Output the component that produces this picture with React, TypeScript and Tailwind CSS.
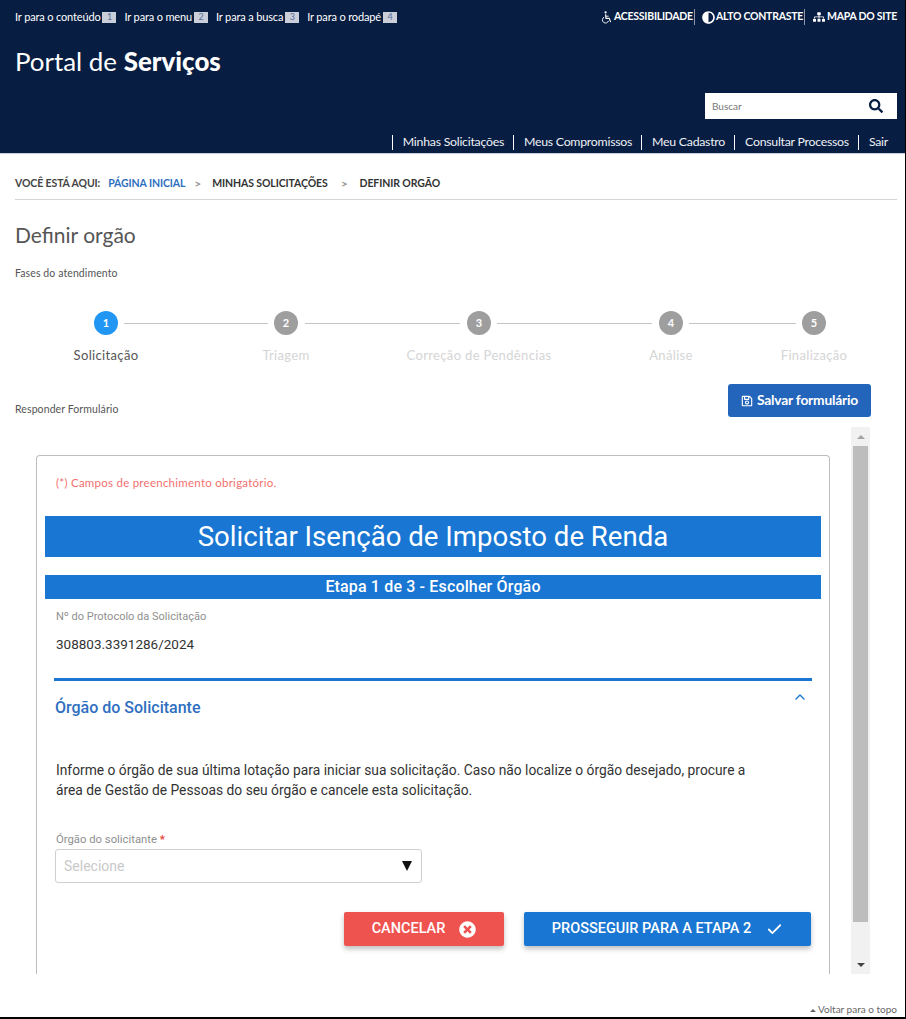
import React from "react";
import { FaAdjust, FaSitemap, FaSearch, FaRegSave, FaTimesCircle } from "react-icons/fa";
import { Check, ChevronUp } from "lucide-react";

const skip = [
  ["Ir para o conteúdo", "1"],
  ["Ir para o menu", "2"],
  ["Ir para a busca", "3"],
  ["Ir para o rodapé", "4"],
];
const nav = ["Minhas Solicitações", "Meus Compromissos", "Meu Cadastro", "Consultar Processos", "Sair"];
const steps = [
  { n: "1", label: "Solicitação", line: "w-[144px] ml-[6px] mr-[6px]" },
  { n: "2", label: "Triagem", line: "w-[155px] ml-[7px] mr-[7px]" },
  { n: "3", label: "Correção de Pendências", line: "w-[155px] ml-[6px] mr-[7px]" },
  { n: "4", label: "Análise", line: "w-[107px] ml-[6px] mr-[6px]" },
  { n: "5", label: "Finalização", line: "" },
];

function WheelchairIcon() {
  return (
    <svg viewBox="0 0 12 14" className="w-[11px] h-[13px] mr-[2px]" fill="none" stroke="currentColor">
      <circle cx="5" cy="1.5" r="1.2" fill="currentColor" stroke="none" />
      <path d="M5 3.5 L5.4 8 L9 8 L10.5 12" strokeWidth="1.2" />
      <path d="M5.2 5.6 L8.3 5.6" strokeWidth="1" />
      <path d="M3.4 6.6 A3.4 3.4 0 1 0 8.2 10.6" strokeWidth="1" />
    </svg>
  );
}

export default function App() {
  return (
    <div className="w-[906px] h-[1019px] bg-white border-r border-b-2 border-black flex flex-col overflow-hidden font-['Lato','Open_Sans',sans-serif] text-[#444]">
      <header className="h-[154px] shrink-0 bg-[#071d41] text-white pl-[15px] pr-[8px] flex flex-col border-b border-[#c8ccd4]">
        <div className="flex justify-between items-center pt-[9px] h-[25px]">
          <div className="flex items-center text-[11px] tracking-[-0.15px]">
            {skip.map(([t, k]) => (
              <span key={k} className="flex items-center mr-[8px]">
                {t}
                <span className="ml-[2px] w-[14px] h-[11px] bg-[#c9ced8] text-[#5a6fa0] text-[9px] flex items-center justify-center">{k}</span>
              </span>
            ))}
          </div>
          <div className="flex items-center text-[10.5px] font-bold tracking-[-0.25px]">
            <WheelchairIcon />
            <span className="border-r border-[#8a97ad] pr-[1px] mr-[7px]">ACESSIBILIDADE</span>
            <FaAdjust className="w-[13px] h-[13px] mr-[1px]" />
            <span className="border-r border-[#8a97ad] pr-[1px] mr-[8px]">ALTO CONTRASTE</span>
            <FaSitemap className="w-[12px] h-[12px] mr-[2px]" />
            <span>MAPA DO SITE</span>
          </div>
        </div>
        <div className="mt-[21px] text-[25.9px] leading-[30px] h-[30px]">
          Portal de <span className="font-black">Serviços</span>
        </div>
        <div className="flex justify-end mt-[17px]">
          <div className="w-[192px] h-[26px] bg-white flex items-center justify-between pl-[7px] pr-[14px]">
            <span className="text-[10px] text-[#777]">Buscar</span>
            <FaSearch className="w-[14px] h-[14px] text-[#071d41]" />
          </div>
        </div>
        <nav className="flex justify-end items-center mt-[14px] pr-[9px] text-[12.3px] tracking-[-0.25px] text-[#eef1f6]">
          {nav.map((n) => (
            <span key={n} className="flex items-center">
              <span className="w-px h-[15px] bg-white mr-[10px] ml-[9px]" />
              {n}
            </span>
          ))}
        </nav>
      </header>

      <main className="flex-1 flex flex-col px-[15px] relative">
        <div className="h-[46px] shrink-0 border-b-[1.5px] border-[#d4d4d4] mr-[-7px] pr-[7px] flex items-center text-[10.5px] font-bold pt-[19px] pb-[4px] tracking-[-0.1px]">
          <span className="text-[#444] mr-[8px]">VOCÊ ESTÁ AQUI:</span>
          <span className="text-[#2f6fc1]">PÁGINA INICIAL</span>
          <span className="text-[#999] text-[12px] ml-[9px] mr-[11px]">&gt;</span>
          <span className="text-[#333]">MINHAS SOLICITAÇÕES</span>
          <span className="text-[#999] text-[12px] ml-[13px] mr-[12px]">&gt;</span>
          <span className="text-[#333]">DEFINIR ORGÃO</span>
        </div>
        <h1 className="text-[21px] leading-[26px] text-[#555] mt-[22px]">Definir orgão</h1>
        <p className="text-[10.5px] leading-[14px] tracking-[0.1px] text-[#555] mt-[18px]">Fases do atendimento</p>

        <div className="flex items-start pl-[79px] mt-[31px] h-[74px] shrink-0">
          {steps.map((s, i) => (
            <React.Fragment key={s.n}>
              <div className="w-[24px] flex flex-col items-center shrink-0">
                <div className={`w-[24px] h-[24px] rounded-full text-white text-[11px] font-bold flex items-center justify-center shrink-0 ${i === 0 ? "bg-[#2196f3]" : "bg-[#9e9e9e]"}`}>
                  {s.n}
                </div>
                <span className={`mt-[12px] text-[13px] leading-[16px] whitespace-nowrap tracking-[0.35px] ${i === 0 ? "text-[#555]" : "text-[#d5d5d5]"}`}>
                  {s.label}
                </span>
              </div>
              {s.line && <div className={`h-px mt-[12px] bg-[#c4c4c4] shrink-0 ${s.line}`} />}
            </React.Fragment>
          ))}
        </div>

        <div className="flex justify-between items-start mr-[19px] mt-[-1px] h-[43px] shrink-0">
          <span className="text-[10.5px] leading-[14px] tracking-[0.1px] mt-[18px] text-[#555]">Responder Formulário</span>
          <button className="w-[143px] h-[33px] rounded-[3px] bg-[#2465bc] text-white text-[13.8px] font-bold flex items-center justify-center gap-[4px] tracking-[-0.2px]">
            <FaRegSave className="w-[12px] h-[12px]" />
            Salvar formulário
          </button>
        </div>

        <div className="flex h-[547px] shrink-0 mr-[20px]">
          <div className="flex-1 pl-[21px] pr-[21px] pt-[28px]">
            <div className="h-full border border-b-0 border-[#bdbdbd] rounded-t-[4px] px-[8px] font-['Roboto',sans-serif]">
              <p className="pl-[11px] pt-[20px] text-[11.5px] leading-[13px] text-[#f26f6f] font-['Lato',sans-serif] tracking-[0.25px]">(*) Campos de preenchimento obrigatório.</p>
              <div className="mt-[27px] h-[41px] bg-[#1976d2] text-white text-[27.6px] flex items-center justify-center">
                Solicitar Isenção de Imposto de Renda
              </div>
              <div className="mt-[18px] h-[24px] bg-[#1976d2] text-white text-[16px] flex items-center justify-center font-medium tracking-[0.15px]">
                Etapa 1 de 3 - Escolher Órgão
              </div>
              <div className="mx-[10px]">
                <p className="mt-[11px] pl-[1px] text-[11px] leading-[14px] text-[#8f8f8f]">Nº do Protocolo da Solicitação</p>
                <p className="mt-[12px] pl-[1px] text-[13.5px] leading-[16px] text-[#333]">308803.3391286/2024</p>
                <div className="mt-[26px] -ml-[1px] mr-[-1px] border-t-[3px] border-[#1976d2] flex justify-between items-start pt-[17px]">
                  <span className="text-[#2f6fc1] text-[16px] leading-[20px] font-medium pl-[1px]">Órgão do Solicitante</span>
                  <ChevronUp className="w-[16px] h-[16px] text-[#1976d2] mr-[4px] mt-[-9px]" strokeWidth={2} />
                </div>
                <p className="mt-[42px] pl-[1px] text-[13.8px] leading-[20px] text-[#333] w-[720px]">
                  Informe o órgão de sua última lotação para iniciar sua solicitação. Caso não localize o órgão desejado, procure a área de Gestão de Pessoas do seu órgão e cancele esta solicitação.
                </p>
                <p className="mt-[33px] pl-[1px] text-[11.3px] leading-[14px] text-[#8f8f8f]">
                  Órgão do solicitante <span className="text-[#e53935] font-bold">*</span>
                </p>
                <div className="mt-[2px] w-[367px] h-[34px] border border-[#cfcfcf] rounded-[3px] flex items-center justify-between pl-[8px] pr-[9px] text-[14px] text-[#c9c9c9]">
                  Selecione
                  <span className="w-0 h-0 border-l-[5px] border-r-[5px] border-t-[10px] border-l-transparent border-r-transparent border-t-[#111]" />
                </div>
                <div className="flex justify-end mt-[29px] gap-[20px]">
                  <button className="w-[160px] h-[34px] rounded-[2px] bg-[#ef5350] text-white text-[14.5px] font-medium flex items-center justify-center gap-[14px] shadow-[0_3px_5px_rgba(0,0,0,0.25)]">
                    CANCELAR <FaTimesCircle className="w-[17px] h-[17px]" />
                  </button>
                  <button className="w-[287px] h-[34px] rounded-[2px] bg-[#1976d2] text-white text-[14.5px] font-medium flex items-center justify-center gap-[15px] shadow-[0_3px_5px_rgba(0,0,0,0.25)]">
                    PROSSEGUIR PARA A ETAPA 2 <Check className="w-[17px] h-[17px]" strokeWidth={2.5} />
                  </button>
                </div>
              </div>
            </div>
          </div>
          <div className="w-[19px] bg-[#f1f1f1] flex flex-col items-center shrink-0">
            <div className="h-[19px] flex items-center justify-center">
              <span className="w-0 h-0 border-l-[4px] border-r-[4px] border-b-[4px] border-l-transparent border-r-transparent border-b-[#a3a3a3]" />
            </div>
            <div className="w-[15px] h-[476px] bg-[#bdbdbd]" />
            <div className="flex-1 flex items-end pb-[7px]">
              <span className="w-0 h-0 border-l-[4px] border-r-[4px] border-t-[4px] border-l-transparent border-r-transparent border-t-[#444]" />
            </div>
          </div>
        </div>

        <div className="flex-1 flex items-end justify-end mr-[-7px] pb-[1px] text-[10px] leading-[14px] text-[#666]">
          <span className="mr-[2px] w-0 h-0 mb-[4px] border-l-[3px] border-r-[3px] border-b-[3px] border-l-transparent border-r-transparent border-b-[#666]" />
          Voltar para o topo
        </div>
      </main>
    </div>
  );
}
